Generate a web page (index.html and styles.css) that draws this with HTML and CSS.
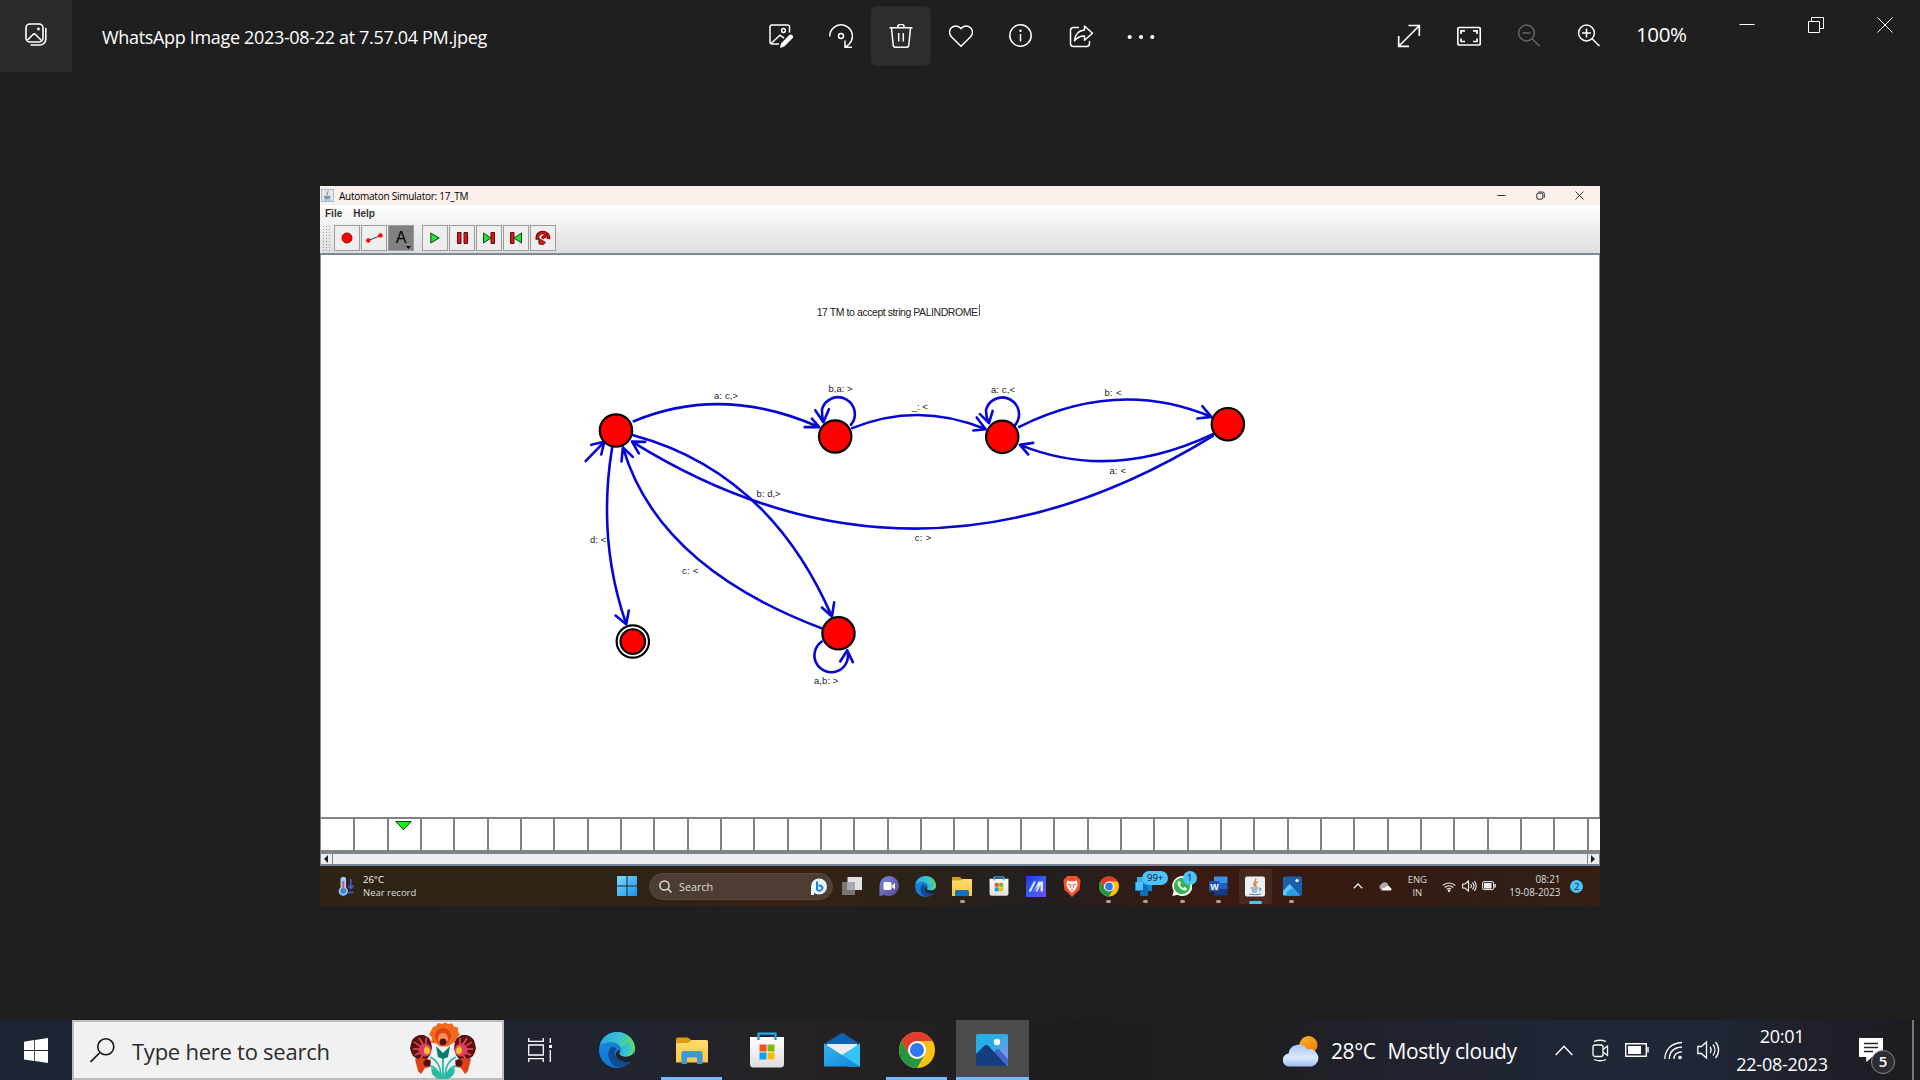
FILE: index.html
```html
<!DOCTYPE html>
<html lang="en">
<head>
<meta charset="utf-8">
<title>Photos</title>
<link rel="stylesheet" href="styles.css">
</head>
<body>
<svg class="defs" width="0" height="0">
  <defs>
    <linearGradient id="edgeTop" x1="0" y1="0.3" x2="1" y2="0.6"><stop offset="0" stop-color="#2aa9e6"/><stop offset=".5" stop-color="#35c4cf"/><stop offset="1" stop-color="#68dc55"/></linearGradient>
    <linearGradient id="edgeBody" x1="0" y1="0" x2="0.6" y2="1"><stop offset="0" stop-color="#1b8fe0"/><stop offset="1" stop-color="#0b6fd0"/></linearGradient>
    <linearGradient id="folderFront" x1="0" y1="0" x2="0" y2="1"><stop offset="0" stop-color="#ffdc70"/><stop offset="1" stop-color="#fcc63f"/></linearGradient>
    <linearGradient id="bagFill" x1="0" y1="0" x2="0" y2="1"><stop offset="0" stop-color="#ffffff"/><stop offset="1" stop-color="#dedede"/></linearGradient>
    <linearGradient id="mailFront" x1="0" y1="0" x2="1" y2="1"><stop offset="0" stop-color="#34b4ee"/><stop offset="1" stop-color="#1585dc"/></linearGradient>
    <linearGradient id="winFill" x1="0" y1="0" x2="1" y2="1"><stop offset="0" stop-color="#7fdcff"/><stop offset="1" stop-color="#1493f0"/></linearGradient>
    <linearGradient id="cloudFill" x1="0" y1="0" x2="0" y2="1"><stop offset="0" stop-color="#a9c8fb"/><stop offset=".6" stop-color="#dce8fd"/><stop offset="1" stop-color="#9dbcf2"/></linearGradient>
    <linearGradient id="sunFill" x1="0" y1="0" x2="0.6" y2="1"><stop offset="0" stop-color="#f9b52b"/><stop offset="1" stop-color="#f07c0c"/></linearGradient>
    <linearGradient id="skyFill" x1="0" y1="0" x2="1" y2="1"><stop offset=".4" stop-color="#27aee9"/><stop offset="1" stop-color="#9d8fe8"/></linearGradient>
    <linearGradient id="chatFill" x1="0" y1="0" x2="1" y2="1"><stop offset="0" stop-color="#7b87e6"/><stop offset="1" stop-color="#5a4691"/></linearGradient>
    <linearGradient id="xFill" x1="0" y1="0" x2="1" y2="1"><stop offset="0" stop-color="#2a2fe0"/><stop offset=".5" stop-color="#2f62f4"/><stop offset="1" stop-color="#7a45f2"/></linearGradient>
    <symbol id="edge" viewBox="0 0 36 36">
      <circle cx="18" cy="18" r="18" fill="url(#edgeBody)"/>
      <path d="M1 13C3 5 10 0 18 0c11 0 18 8 18 16 0 5-4 8.500-9 8.500-4 0-6.500-1.500-6.500-3 0-1.200 1.800-1.800 1.500-4.500C21.500 13 17 10 12 10 7 10 3 12 1 13z" fill="url(#edgeTop)"/>
      <path d="M13 14.500c-3 3-4.500 7-3 11.500C12 32 17 36 22 35.500c5-1 9-4.500 11-8-6 3-13 2-16-3-1.500-2.500-1.500-5 .5-8z" fill="#114a8f"/>
      <path d="M20.500 21.500c0 1.500 2.500 3 6.500 3 3.500 0 6.500-1.500 8-4v7c-5 4-13 3-16.500-1-2.500-3-2-7 1-8.500 1.800 0 2.200 1.500 1 3.500z" fill="#20222a"/>
      <path d="M20.500 21.500c0 1.500 2.500 3 6.500 3 4.500 0 9-3 9-8.500l-7-5-7 5c.3 3-1.500 4-1.500 5.500z" fill="url(#edgeTop)"/>
    </symbol>
    <symbol id="folder" viewBox="0 0 32 27">
      <path d="M0 2a1.500 1.500 0 0 1 1.500-1.500H12L15 3h16v8H0z" fill="#dd9d0a"/>
      <path d="M0 6h12.500L15.500 3H30.500A1.500 1.500 0 0 1 32 4.500V25.500H0z" fill="url(#folderFront)"/>
    </symbol>
    <symbol id="store" viewBox="0 0 36 36">
      <path d="M9.500 8V1.700H26.500V8" fill="none" stroke="#28a8ea" stroke-width="2.200"/>
      <path d="M1 5H35V32a3.500 3.500 0 0 1-3.500 3.500H4.500A3.500 3.500 0 0 1 1 32z" fill="url(#bagFill)"/>
      <path d="M9.500 5V8M26.500 5V8" stroke="#1687cf" stroke-width="2.200"/>
      <path d="M10.500 12.500h7v7h-7z" fill="#f25022"/><path d="M18.500 12.500h7v7h-7z" fill="#7fba00"/>
      <path d="M10.500 20.500h7v7h-7z" fill="#00a4ef"/><path d="M18.500 20.500h7v7h-7z" fill="#ffb900"/>
    </symbol>
    <symbol id="chrome" viewBox="0 0 36 36">
      <circle cx="18" cy="18" r="18" fill="#fbc116"/>
      <path d="M2.400 9A18 18 0 0 1 33.600 9H18L10.200 22.500z" fill="#e33b2e"/>
      <path d="M10.200 22.500L2.400 9A18 18 0 0 0 0 18 18 18 0 0 0 18 36L25 24z" fill="#25963f"/>
      <circle cx="18" cy="18" r="9" fill="#fff"/><circle cx="18" cy="18" r="7" fill="#2f78ee"/>
    </symbol>
    <symbol id="java" viewBox="0 0 20 20">
      <rect width="20" height="20" rx="2" fill="#eef1f4"/>
      <path d="M10.500 2c2 2.500-4 4.500-.5 8M13 5c-3 1.500-3 3-1.500 5" fill="none" stroke="#e0782c" stroke-width="1.300"/>
      <path d="M5.500 11.500h8M6.500 13.500h6M7 15.500h5M4 17.500c3 1 9 1 12-.3M14 11.500c2.500 0 2 2.500 0 2.500" fill="none" stroke="#5d83a6" stroke-width="1.100"/>
    </symbol>
    <symbol id="play" viewBox="0 0 10 12"><path d="M.8 1v10L9.200 6z" fill="#1be62e" stroke="#14401a" stroke-width="1"/></symbol>
  </defs>
</svg>

<header class="titlebar">
  <div class="home-tab">
    <svg width="24" height="24" viewBox="0 0 24 24" fill="none" stroke="#fff" stroke-width="1.600"><rect x="2" y="1" width="17" height="18" rx="4"/><path d="M21.800 5v11a6 6 0 0 1-6 6H6.500M3.500 17l5.500-5.500a1.800 1.800 0 0 1 2.500 0L17.500 17.500"/><circle cx="14.500" cy="6" r="1.400" fill="#fff" stroke="none"/></svg>
  </div>
  <div class="file-name">WhatsApp Image 2023-08-22 at 7.57.04 PM.jpeg</div>
  <nav class="commands">
    <button><svg width="24" height="24" viewBox="0 0 24 24" fill="none" stroke="#fff" stroke-width="1.500"><path d="M20.500 8.500V3a2 2 0 0 0-2-2H3a2 2 0 0 0-2 2v15a2 2 0 0 0 2 2h7M2 19.500l9-8.300 4 3"/><circle cx="14.500" cy="6.500" r="1.900"/><path d="M11 24l1-4.500 8-8.200a2.200 2.200 0 0 1 3.300 3.200l-8 8z" fill="#fff" stroke="none"/></svg></button>
    <button><svg width="24" height="24" viewBox="0 0 24 24" fill="none" stroke="#fff" stroke-width="1.500"><path d="M.8 12.500A11.300 11.300 0 1 1 20 20.300L16.500 23.200M16 16.500V23.200H23"/><circle cx="12" cy="12" r="2.500"/></svg></button>
    <button class="active"><svg width="24" height="24" viewBox="0 0 24 24" fill="none" stroke="#fff" stroke-width="1.500"><path d="M.5 3.800h23M8.700 3.500a3.300 3.300 0 0 1 6.600 0M2.500 4l1.700 17a2.300 2.300 0 0 0 2.300 2.200h11a2.300 2.300 0 0 0 2.300-2.200L21.500 4M9.700 9v8.500M14.300 9v8.500"/></svg></button>
    <button><svg width="24" height="24" viewBox="0 0 24 24" fill="none" stroke="#fff" stroke-width="1.500"><path d="M12 22.300L2.400 12.700A6.200 6.200 0 0 1 2.400 3.800 6.200 6.200 0 0 1 11.200 3.800L12 4.600l.8-.8a6.200 6.200 0 0 1 8.800 0 6.200 6.200 0 0 1 0 8.900z"/></svg></button>
    <button><svg width="24" height="24" viewBox="0 0 24 24" fill="none" stroke="#fff" stroke-width="1.500"><circle cx="11.500" cy="11.500" r="10.700"/><path d="M11.500 10v7.500"/><circle cx="11.500" cy="6.700" r="1.200" fill="#fff" stroke="none"/></svg></button>
    <button><svg width="24" height="24" viewBox="0 0 24 24" fill="none" stroke="#fff" stroke-width="1.500" stroke-linejoin="round"><path d="M10 3.500H4.500a3 3 0 0 0-3 3v13a3 3 0 0 0 3 3h13a3 3 0 0 0 3-3V17M15.500 2l8 7.200-8 7v-4.200c-4.500 0-7.500 1.500-10 4.800C6 11 9 6.500 15.500 6z"/></svg></button>
    <button><svg width="28" height="24" viewBox="0 0 28 24" fill="#fff"><circle cx="2.700" cy="13" r="2.100"/><circle cx="14" cy="13" r="2.100"/><circle cx="25.300" cy="13" r="2.100"/></svg></button>
  </nav>
  <nav class="zoom-tools">
    <button><svg width="24" height="24" viewBox="0 0 24 24" fill="none" stroke="#fff" stroke-width="1.700"><path d="M2 22L22 2M11.500 1.500H22.300V12M1.700 12v10.300H12"/></svg></button>
    <button><svg width="24" height="24" viewBox="0 0 24 24" fill="none" stroke="#fff" stroke-width="1.700"><rect x=".8" y="3.500" width="22.500" height="17.500" rx="1.500"/><path d="M8 6.800H4V10M16 6.800h4V10M8 17.500H4V14.500M16 17.500h4V14.500"/></svg></button>
    <button><svg width="24" height="24" viewBox="0 0 24 24" fill="none" stroke="#666" stroke-width="1.500"><circle cx="9.500" cy="9" r="7.900"/><path d="M15 14.800l7.500 7.200M5.500 9h8"/></svg></button>
    <button><svg width="24" height="24" viewBox="0 0 24 24" fill="none" stroke="#fff" stroke-width="1.500"><circle cx="9.500" cy="9" r="7.900"/><path d="M15 14.800l7.500 7.200M5 9h9M9.500 4.500v9"/></svg></button>
  </nav>
  <div class="zoom-level">100%</div>
  <nav class="window-buttons">
    <button><svg width="16" height="16" viewBox="0 0 16 16" stroke="#fff" fill="none"><path d="M.5 7.500h15"/></svg></button>
    <button><svg width="16" height="16" viewBox="0 0 16 16" stroke="#fff" fill="none"><path d="M.5 4.500h11v11H.5zM3.500 4V.5h12v11H12"/></svg></button>
    <button><svg width="16" height="16" viewBox="0 0 16 16" stroke="#fff" fill="none"><path d="M.5.5l15 15M15.500.5l-15 15"/></svg></button>
  </nav>
</header>

<main class="viewer">
  <section class="photo">
    <div class="sim-title">
      <svg width="13" height="13" viewBox="0 0 20 20"><rect x=".5" y=".5" width="19" height="19" fill="#dfe9ef" stroke="#8ea3b0"/><path d="M10.500 3c2 2-3.500 3.500-.5 6.500" fill="none" stroke="#d27a55" stroke-width="1.800"/><path d="M5 11h9v2c0 3-9 3-9 0zM4 17h12" fill="#6c93b3" stroke="#6c93b3"/></svg>
      <span>Automaton Simulator: 17_TM</span>
      <div class="sim-window">
        <svg width="9" height="9" viewBox="0 0 9 9" stroke="#333" fill="none"><path d="M.5 4.500h8"/></svg>
        <svg width="9" height="9" viewBox="0 0 9 9" stroke="#333" fill="none"><rect x=".8" y="2.200" width="6" height="6" rx="1.200"/><path d="M2.500 1h4a1.800 1.800 0 0 1 1.800 1.800v4"/></svg>
        <svg width="9" height="9" viewBox="0 0 9 9" stroke="#333" fill="none"><path d="M.5.5l8 8M8.500.5l-8 8"/></svg>
      </div>
    </div>
    <div class="sim-head">
      <div class="sim-menu"><span>File</span><span>Help</span></div>
      <div class="sim-tools">
        <i class="grip"></i>
        <b><svg width="12" height="12"><circle cx="6" cy="6" r="5" fill="#f00" stroke="#8a1010"/></svg></b>
        <b><svg width="17" height="10"><path d="M2 7.500L15 2.500" stroke="#333"/><circle cx="2.300" cy="7.500" r="2.200" fill="#f00"/><circle cx="14.500" cy="2.400" r="2.200" fill="#f00"/></svg></b>
        <b class="on">A<svg class="caret" width="5" height="3"><path d="M0 0h5L2.500 3z"/></svg></b>
        <b class="gap"><svg width="10" height="12"><use href="#play"/></svg></b>
        <b><svg width="11" height="12" fill="#e01717" stroke="#5c0c0c"><path d="M.5.500h3.500v11H.5zM7 .5h3.500v11H7z"/></svg></b>
        <b><svg width="12" height="12"><path d="M.5 1v10L8 6z" fill="#1be62e" stroke="#14401a"/><path d="M8 .5h3.500v11H8z" fill="#e01717" stroke="#5c0c0c"/></svg></b>
        <b><svg width="12" height="12"><path d="M11.500 1v10L4 6z" fill="#1be62e" stroke="#14401a"/><path d="M.5.500H4v11H.5z" fill="#e01717" stroke="#5c0c0c"/></svg></b>
        <b><svg width="16" height="16" fill="none"><path d="M2.500 9.500C1.500 5 4.500 2.500 8 2.500s6 3 5.500 6.500" stroke="#500808" stroke-width="3.600"/><path d="M2.500 9.500C1.500 5 4.500 2.500 8 2.500s6 3 5.500 6.500" stroke="#dd1414" stroke-width="2"/><path d="M12 6.500C10 5.500 8.500 6.500 7.500 8.500" stroke="#500808" stroke-width="3.200"/><path d="M12 6.500C10 5.500 8.500 6.500 7.500 9" stroke="#dd1414" stroke-width="1.800"/><path d="M3.500 8l7 4.500-2.500 2.300-4-.8z" fill="#dd1414" stroke="#500808" stroke-width=".8"/></svg></b>
      </div>
    </div>
    <svg class="diagram" viewBox="320 255 1280 562" width="1280" height="562">
      <g class="edges">
        <path d="M633.300 421Q722 384 819 427M804.500 427L819 427 811.700 418.500"/>
        <path d="M850.700 424.700A16.800 16.800 0 1 0 821.800 409Q821.500 416 823.200 422M815 410L823.200 422 828.700 409"/>
        <path d="M852 428Q918 401 985.700 429M973.300 430.300L985.700 429 976.700 417.300"/>
        <path d="M1015.300 424.700A16.800 16.800 0 1 0 986 410Q986 417 989 423M980 414L989 423 992.700 410.700"/>
        <path d="M1019.300 426.700Q1118 377.500 1211.700 416.700M1202.700 406L1211.700 416.700 1197.700 418.300"/>
        <path d="M1213.300 434Q1112 482 1020 444.700M1033.300 442.700L1020 444.700 1028.300 454.300"/>
        <path d="M1213.300 435.700Q916 618.500 631.500 441.500M644.700 441.700L631.500 441.500 638.300 453.300"/>
        <path d="M632.700 435Q768.700 471.700 831.700 616.700M834 602.300L831.700 616.700 821.700 607.700"/>
        <path d="M821 628.300Q657 566 622.400 447.300M621 461.300L622.400 447.300 632.300 456.700"/>
        <path d="M611.500 448Q596.500 540 625.700 624.300M628.300 610.700L625.700 624.300 615 615.700"/>
        <path d="M585 461L603.700 441.700M590.700 444.700L603.700 441.700 600.700 454.300"/>
        <path d="M821.700 641.700A16.800 16.800 0 1 0 847 650.500M840 661.700L847 650.500 852.700 662.300"/>
      </g>
      <g class="states">
        <circle cx="615.400" cy="430.300" r="16.200"/><circle cx="835" cy="436.300" r="16.200"/><circle cx="1002.300" cy="436.700" r="16.200"/>
        <circle cx="1228.300" cy="424" r="16.200"/><circle cx="838.300" cy="633.500" r="16.200"/>
        <circle class="ring" cx="632.300" cy="641.700" r="16.200"/><circle cx="632.300" cy="641.700" r="12.300"/>
      </g>
      <g class="labels">
        <text x="713.700" y="399" textLength="24">a: c,&gt;</text><text x="828.300" y="392" textLength="24">b,a: &gt;</text>
        <text x="911.700" y="409.500" textLength="16">_: &lt;</text><text x="991" y="392.500" textLength="24">a: c,&lt;</text>
        <text x="1104.700" y="396" textLength="17">b: &lt;</text><text x="1109.700" y="473.500" textLength="16.500">a: &lt;</text>
        <text x="756.300" y="497.300" textLength="24">b: d,&gt;</text><text x="914.700" y="540.700" textLength="16.500">c: &gt;</text>
        <text x="589.300" y="543" textLength="16.500">d: &lt;</text><text x="681.500" y="573.700" textLength="16.500">c: &lt;</text>
        <text x="813.700" y="684" textLength="24.500">a,b: &gt;</text>
        <text class="caption" x="816.500" y="315.500" textLength="161.500">17 TM to accept string PALINDROME</text>
        <path d="M979.500 304v11.500" stroke="#555"/>
      </g>
    </svg>
    <div class="tape"><svg width="17" height="10"><path d="M.8.500h15.400L8.500 8.800z" fill="#0f0" stroke="#063d06"/></svg></div>
    <div class="scrollbar">
      <i><svg width="4" height="8"><path d="M4 0v8L0 4z" fill="#222"/></svg></i>
      <i><svg width="4" height="8"><path d="M0 0v8l4-4z" fill="#222"/></svg></i>
    </div>
    <div class="inner-bar">
      <div class="record">
        <svg width="16" height="20" viewBox="0 0 16 20"><path d="M2.500 3.500a2.800 2.800 0 0 1 5.600 0v8a4.600 4.600 0 1 1-5.600 0z" fill="#9ccdf5"/><circle cx="5.300" cy="15" r="3" fill="#2490e6"/><path d="M5.300 5v9" stroke="#d8546c" stroke-width="1.800"/><path d="M12.800 3v9M10.300 9.500l2.500 3 2.500-3M10 16.500h5.500" fill="none" stroke="#3c62d8" stroke-width="1.500"/></svg>
        <p><span class="bright">26°C</span><span>Near record</span></p>
      </div>
      <svg class="win11" width="20" height="20" viewBox="0 0 20 20" fill="url(#winFill)"><path d="M0 0h9.500v9.500H0zM10.500 0H20v9.500h-9.500zM0 10.500h9.500V20H0zM10.500 10.500H20V20h-9.500z"/></svg>
      <div class="inner-search">
        <svg width="13" height="13" viewBox="0 0 13 13" fill="none" stroke="#ddd" stroke-width="1.500"><circle cx="5.500" cy="5.500" r="4.600"/><path d="M9 9l3.500 3.500"/></svg>
        <span>Search</span>
        <svg width="16" height="17" viewBox="0 0 16 17"><circle cx="8" cy="8.500" r="8" fill="#e9f6fd"/><path d="M0 8h3v9H0z" fill="#e9f6fd"/><path d="M6 3.500v8.500M6 12c3 2 6-.5 5.500-2.500C11 8 9 7.500 7.500 7.500" fill="none" stroke="#1683d8" stroke-width="2"/></svg>
      </div>
      <div class="inner-apps">
        <div><svg width="20" height="20"><path d="M0 6h13v13H0z" fill="#777"/><path d="M5.500 1H20v13H5.500z" fill="#ececec" opacity=".95"/><path d="M5.500 6H13v8H5.500z" fill="#aaa"/></svg></div>
        <div><svg width="20" height="20"><path d="M10 0a10 10 0 1 1-4.500 19L.5 20V10A10 10 0 0 1 10 0z" fill="url(#chatFill)"/><rect x="4.500" y="6" width="8" height="8" rx="1.500" fill="#fff"/><path d="M13 9.500L16 7v6.500L13 11z" fill="#fff"/></svg></div>
        <div><svg width="21" height="21"><use href="#edge"/></svg></div>
        <div class="run"><svg width="20" height="20"><path d="M0 1h8l2 2h10v5H0z" fill="#d99812"/><path d="M0 4.500h9l1.500-1.500H20v17H0z" fill="url(#folderFront)"/><path d="M3 20v-4.500a1.500 1.500 0 0 1 1.500-1.500h11a1.500 1.500 0 0 1 1.500 1.500V20z" fill="#1173b8"/></svg></div>
        <div><svg width="20" height="20"><use href="#store"/></svg></div>
        <div><svg width="20" height="21"><path d="M0 0h20v21H0z" fill="url(#xFill)"/><path d="M2.500 15.500L7.800 5.500H10L5 15.500zM7.500 15.500L12.500 5.500H17V15.500H14.500V9L11.500 15.500H9.500L12.500 9z" fill="#dfe6ff"/></svg></div>
        <div><svg width="18" height="21" viewBox="0 0 18 21"><path d="M4.500 0h9l4 4-.8 9.500L9 21 1.300 13.500.5 4z" fill="#f6512c"/><path d="M4 4.500l3 .8h4l3-.8.5 5-2.500 4.500L9 17l-3-3-2.500-4.500z" fill="#fff"/><path d="M5 8l3 1-1 3M13 8l-3 1 1 3M8 13.500h2" fill="none" stroke="#f6512c"/></svg></div>
        <div class="run"><svg width="20" height="21"><use href="#chrome"/></svg></div>
        <div class="run badged"><svg width="20" height="20"><path d="M2 1h11v13H2z" fill="#35aef0"/><path d="M0 6h17v9H0z" fill="#1788d4"/><path d="M5 9h8v11H5z" fill="#0e6cbd"/><path d="M1 6h7v8H1z" fill="#48c0f5"/></svg><em class="wide">99+</em></div>
        <div class="run badged"><svg width="20" height="20"><path d="M10 0a10 10 0 1 1-4.500 18.700L.3 20l1.400-4.800A10 10 0 0 1 10 0z" fill="#fff"/><circle cx="10" cy="10" r="8.300" fill="#35b54d"/><path d="M6 5.500c-2 3 3.500 9.500 7.500 9 1.500-.5 1.500-2 1-2.500l-2-1-1.500 1c-1.500-.5-2.500-1.500-3-3l1-1.500-1-2c-.5-.5-1.500-.5-2 0z" fill="#fff"/></svg><em>1</em></div>
        <div class="run"><svg width="20" height="20"><path d="M5 .5h13.500V7H5z" fill="#3d8fe8"/><path d="M5 7h13.500v6H5z" fill="#1e5fc0"/><path d="M5 13h13.500v6.500H5z" fill="#133d80"/><path d="M0 5h10.500v10.500H0z" fill="#1c52b0"/><text x="1.300" y="13.500" class="w">W</text></svg></div>
        <div class="current"><svg width="20" height="21"><use href="#java"/></svg></div>
        <div class="run"><svg width="19" height="20"><rect y=".5" width="19" height="19" rx="1.500" fill="#1d5faa"/><path d="M0 15l6.500-7L17 19.500H1.500A1.500 1.500 0 0 1 0 18z" fill="#5cc8fa"/><path d="M4 16l5-4 8 7.500H3z" fill="#2c9be8"/><circle cx="14" cy="4.500" r="1.600" fill="#fff"/></svg></div>
      </div>
      <div class="inner-tray">
        <svg width="10" height="6" fill="none" stroke="#eee" stroke-width="1.300"><path d="M.8 5.200L5 1l4.200 4.200"/></svg>
        <svg width="14" height="10"><path d="M3 8.500a2.800 2.800 0 0 1 0-5 4 4 0 0 1 7-.5l1 5z" fill="#aaa"/><path d="M3.500 9.500c0-2 2-3 3.500-2.500C8 4 12 4.500 12 6.500c2 .5 2 3 0 3z" fill="#fff"/></svg>
        <p class="lang"><span>ENG</span><span>IN</span></p>
        <svg width="14" height="11" fill="none" stroke="#eee" stroke-width="1.100"><path d="M.8 4.500a9 9 0 0 1 12.400 0M2.800 6.500a6 6 0 0 1 8.400 0M4.800 8.300a3.200 3.200 0 0 1 4.400 0"/><circle cx="7" cy="9.800" r=".7" fill="#eee"/></svg>
        <svg width="15" height="12" fill="none" stroke="#eee" stroke-width="1.100"><path d="M.6 4v4h2.300L6.500 11V1L2.900 4zM8.500 4a3 3 0 0 1 0 4M10.500 2.500a5 5 0 0 1 0 7M12.300 1a7.500 7.500 0 0 1 0 10"/></svg>
        <svg width="14" height="10"><rect x=".6" y=".6" width="11" height="8" rx="1.500" fill="none" stroke="#eee"/><path d="M2 2H9.500v5.500H2zM12.300 3h1.500v3.500h-1.500z" fill="#eee"/></svg>
        <p class="clock"><span>08:21</span><span>19-08-2023</span></p>
        <strong>2</strong>
      </div>
    </div>
  </section>
</main>

<footer class="taskbar">
  <div class="start"><svg width="24" height="25" viewBox="0 0 24 25" fill="#fff"><path d="M0 3.700L10.200 2v10H0zM11 1.900L24 0v12H11zM0 12.900h10.200v10L0 21.500zM11 12.900h13v12L11 23z"/></svg></div>
  <div class="search">
    <svg width="25" height="25" viewBox="0 0 25 25" fill="none" stroke="#111" stroke-width="1.600"><circle cx="15.800" cy="8.800" r="8"/><path d="M10 14.500L.5 24"/></svg>
    <span>Type here to search</span>
    <svg class="flower" width="66" height="57" viewBox="0 0 66 57">
      <path d="M21 9l2-4 3-1 2-3 4 1 3-1.500 3 1.500 4-.5 2 3 4 1 0 4 2 3-3 3 0 4-5 2-4 3h-8l-4-3-5-1 1-5-3-3z" fill="#f26a1b"/>
      <path d="M25 15c0-5 3-9 8-9s8 4 8 9l-3 6H28z" fill="#e2420d"/><path d="M28 18c0-6 3-7 5-7s5 1 5 7l-2 4h-6z" fill="#f7925a"/>
      <circle cx="33" cy="20" r="3.500" fill="#53110f"/>
      <path d="M1 22l1-4 3-3 4-2 5 0 5 3 2 4 1 6-2 7-3 4-5 1-5-1-4-3-2-4-1-4z" fill="#5a1116"/>
      <path d="M65 22l-1-4-3-3-4-2-5 0-5 3-2 4-1 6 2 7 3 4 5 1 5-1 4-3 2-4 1-4z" fill="#5a1116"/>
      <g stroke="#ee5149" stroke-width="1.500"><path d="M3 27h12M4 20l12 8M9 16l7 11M16 16v10M5 33l11-5M10 37l7-9M63 27H51M62 20l-12 8M57 16l-7 11M50 16v10M61 33l-11-5M56 37l-7-9"/></g>
      <circle cx="15" cy="28" r="6.500" fill="#e2396b"/><circle cx="51" cy="28" r="6.500" fill="#e2396b"/>
      <path d="M14 29c0-6 4-6 6-1 1 5-6 6-6 1zM52 29c0-6-4-6-6-1-1 5 6 6 6 1z" fill="#f9c41a"/>
      <path d="M5 37l7-1 9 2-1 7-5 1-4 6-3-3-1-4z" fill="#da4218"/><path d="M61 37l-7-1-9 2 1 7 5 1 4 6 3-3 1-4z" fill="#da4218"/>
      <circle cx="17" cy="41" r="3.500" fill="#4f1012"/><circle cx="49" cy="41" r="3.500" fill="#4f1012"/>
      <path d="M33 57V34M31 53Q30 39 20 35M35 53Q36 39 46 35M30 55Q26 44 20 44M36 55Q40 44 46 44" fill="none" stroke="#25b9a5" stroke-width="1.800"/>
      <path d="M26 24l7 7 7-7-2 11-5 2-5-2z" fill="#087b70"/><path d="M21 46c6 1 10 4 12 10 2-6 6-9 12-10l-1 6-4 4-7 2-7-2-4-4z" fill="#27bba5"/>
    </svg>
  </div>
  <div class="taskview"><svg width="24" height="24" viewBox="0 0 24 24" fill="none" stroke="#fff" stroke-width="1.300"><path d="M.7 0v3.300h14.600V0M.7 24v-3.300h14.600V24M.7 7h14.600v10H.7zM22.300 0v5M22.300 12v12"/><path d="M21 7h3v3h-3z" fill="#fff" stroke="none"/></svg></div>
  <div class="apps">
    <div><svg width="36" height="36"><use href="#edge"/></svg></div>
    <div class="open"><svg width="32" height="27" viewBox="0 0 32 27"><use href="#folder" width="32" height="27"/><path d="M5.500 27V16a2 2 0 0 1 2-2h17a2 2 0 0 1 2 2v11h-5.500v-6.500H11V27z" fill="#3b97df"/></svg></div>
    <div><svg width="36" height="36"><use href="#store"/></svg></div>
    <div><svg width="36" height="34" viewBox="0 0 36 34"><path d="M0 11L16 .8a3.500 3.500 0 0 1 4 0L36 11v5H0z" fill="#0c62b4"/><path d="M3 11h30v8l-15 6-15-6z" fill="#ededed"/><path d="M36 10.500L18 22 24 33.500H36z" fill="#35c3f3"/><path d="M0 10.500L36 33.500H0z" fill="url(#mailFront)"/></svg></div>
    <div class="open"><svg width="36" height="36"><use href="#chrome"/></svg></div>
    <div class="focused"><svg width="32" height="32" viewBox="0 0 32 32"><rect width="32" height="32" rx="1.500" fill="url(#skyFill)"/><circle cx="21" cy="8" r="3.200" fill="#fff"/><path d="M14 24l5.500-8a2.500 2.500 0 0 1 4 0L32 25v5l-2 2z" fill="#3f68c8"/><path d="M0 20L8 12a3 3 0 0 1 4.500 0L31 32H1.500A1.500 1.500 0 0 1 0 30.500z" fill="#143f7d"/></svg></div>
  </div>
  <div class="weather">
    <svg width="36" height="31" viewBox="0 0 36 31"><circle cx="25.500" cy="9" r="9" fill="url(#sunFill)"/><path d="M7 30.500A6.500 6.500 0 0 1 5.500 17.500 10 10 0 0 1 24 13.500a8.300 8.300 0 0 1 5 17z" fill="url(#cloudFill)"/></svg>
    <span>28°C</span><span class="sky">Mostly cloudy</span>
  </div>
  <div class="tray">
    <svg width="18" height="11" fill="none" stroke="#fff" stroke-width="1.400"><path d="M.7 10L9 1.300 17.300 10"/></svg>
    <svg width="17" height="23" fill="none" stroke="#fff" stroke-width="1.300"><rect x="1" y="6" width="10" height="11.500" rx="2"/><path d="M11 10.500l4.500-3.500v9.500L11 13M2 2.500Q8 0 14 2.500M2 20.500Q8 23 14 20.500"/></svg>
    <svg width="24" height="14" fill="none" stroke="#fff" stroke-width="1.400"><path d="M.7.700h20.600v12.600H.7zM23 4v5.500"/><path d="M3 3h13v8H3z" fill="#fff" stroke="none"/></svg>
    <svg width="19" height="19" fill="none" stroke="#fff" stroke-width="1.300"><g><path d="M.8 18C1 9 7 2 18 1.500M5.300 18C5.500 11 10 6.500 18 6M9.800 18c.2-4 3-7 8.200-7.200"/></g><circle cx="16" cy="16.500" r="1.800" fill="#fff" stroke="none"/></svg>
    <svg width="23" height="20" fill="none" stroke="#fff" stroke-width="1.300"><path d="M.8 6.500v7h3.500L9.500 18V2L4.300 6.500zM13 7a5 5 0 0 1 0 6M16 4.500a9 9 0 0 1 0 11M18.500 2a12 12 0 0 1 0 16"/></svg>
  </div>
  <div class="datetime"><span>20:01</span><span>22-08-2023</span></div>
  <div class="notices"><svg width="24" height="24" viewBox="0 0 24 24"><path d="M0 0h24v19H13L7.500 24 7 19H0z" fill="#fff"/><path d="M5 5.500h14M5 9.500h14M5 13.500h9" stroke="#222" stroke-width="1.300"/></svg><em>5</em></div>
</footer>
</body>
</html>
```
FILE: styles.css
```css
* { box-sizing: border-box; }
body { margin: 0; width: 1920px; height: 1080px; overflow: hidden; display: flex; flex-direction: column; background: #1f1f1f; color: #fff; font-family: "Open Sans", "Noto Sans", sans-serif; }
svg { display: block; flex: none; }
.defs { position: absolute; }
p, i, em, b, strong { margin: 0; font-style: normal; }
button { border: 0; padding: 0; background: none; display: flex; align-items: center; justify-content: center; border-radius: 6px; }

.titlebar { height: 72px; flex: none; display: grid; grid-template-columns: 72px 679px 420px 208px 240px 93px 208px; }
.titlebar > div { display: flex; align-items: center; }
.home-tab { background: #2b2b2b; justify-content: center; padding-bottom: 2px; }
.file-name { padding-left: 30px; padding-top: 1px; font-size: 18px; letter-spacing: -.33px; white-space: nowrap; }
.commands, .zoom-tools { display: grid; grid-auto-flow: column; grid-auto-columns: 60px; height: 66px; padding-top: 6px; }
.commands .active { background: #2c2c2c; }
.zoom-tools { grid-column: 5; }
.zoom-level { padding: 0 0 4px 17px; font-size: 20.500px; letter-spacing: -.4px; }
.window-buttons { display: grid; grid-template-columns: repeat(3, 69px); height: 49px; }

.viewer { flex: 1; display: flex; align-items: center; justify-content: center; }
.photo { width: 1280px; height: 720px; display: flex; flex-direction: column; background: #fff; color: #000; }
.sim-title { height: 19px; flex: none; display: flex; align-items: center; background: #f9efeb; padding-left: 1px; font-size: 10px; letter-spacing: -.25px; }
.sim-title > span { padding-left: 5px; }
.sim-window { margin-left: auto; display: flex; gap: 30px; padding-right: 16px; }
.sim-head { height: 50px; flex: none; background: linear-gradient(#fefefe, #dedede); border-bottom: 2px solid #7a8a99; }
.sim-menu { display: flex; gap: 11px; height: 20px; padding: 0 0 3px 5px; align-items: center; font: bold 10px "Liberation Sans", Arial, sans-serif; color: #333; }
.sim-tools { display: flex; align-items: center; padding-left: 2px; }
.sim-tools b { position: relative; width: 26px; height: 26px; margin-right: 1px; border: 1px solid #9c9c9c; background: #eee; display: flex; align-items: center; justify-content: center; }
.sim-tools .on { background: #808080; font: 16px "Liberation Sans", Arial, sans-serif; }
.sim-tools .caret { position: absolute; right: 2px; bottom: 1px; }
.sim-tools .gap { margin-left: 7px; }
.grip { width: 8px; height: 26px; margin-right: 4px; background: radial-gradient(#999 .7px, transparent 1px) 0 0 / 3px 3px; }

.diagram { border-left: 1px solid #7a8a99; border-right: 1px solid #7a8a99; }
.edges path { fill: none; stroke: #0505d6; stroke-width: 2.600; stroke-linecap: round; stroke-linejoin: round; }
.states circle { fill: #f00; stroke: #000; stroke-width: 2.200; }
.states .ring { fill: #fff; }
.labels { font: 9.500px "Liberation Sans", Arial, sans-serif; fill: #222; }
.labels .caption { font-size: 10.500px; }

.tape { height: 36px; flex: none; padding: 2px 0 0 74px; border: solid #838383; border-width: 2px 0 3px 1px; background: repeating-linear-gradient(90deg, #fff 0 31.300px, #808080 31.300px 33.333px) 1px 0; }
.scrollbar { height: 13px; flex: none; display: flex; justify-content: space-between; background: #eee; border: solid #73869a; border-width: 1px 1px 2px; }
.scrollbar i { width: 12px; padding-right: 2px; display: flex; align-items: center; justify-content: center; background: #eee; border: solid #73869a; border-width: 0 1px 0 0; }
.scrollbar i:last-child { border-width: 0 0 0 1px; }

.inner-bar { flex: 1; display: flex; align-items: center; color: #ddd; font-size: 9.500px; background: linear-gradient(90deg, #2f2414, #2e2315 28%, #3a2112 35%, #2e2317 43%, #231f1f 57%, #391b12 69%, #361b12 83%, #2f1f16 93%, #351e13); }
.inner-bar p { display: flex; flex-direction: column; line-height: 13px; white-space: nowrap; }
.record { width: 297px; padding-left: 18px; display: flex; align-items: center; gap: 9px; }
.bright { color: #fff; }
.inner-search { width: 184px; height: 27px; margin: 0 1px 0 12px; padding: 0 5px 0 9px; border-radius: 14px; background: #4d3d32; border: 1px solid #5b493d; display: flex; align-items: center; font-size: 10.800px; }
.inner-search span { padding-left: 7px; flex: 1; }
.inner-apps { display: flex; }
.inner-apps > div { position: relative; width: 36.650px; height: 40px; display: flex; align-items: center; justify-content: center; }
.run::after, .current::after { content: ""; position: absolute; bottom: 3.500px; left: 15.800px; width: 5px; height: 3px; border-radius: 2px; background: #aaa29e; }
.inner-apps .current { width: 32.650px; height: 35px; margin: 2.500px 2px; border-radius: 3px; background: #47291f; }
.current::after { left: 10px; width: 13px; bottom: 0; background: #4cc2ff; }
.badged em { position: absolute; top: 5px; left: 19px; min-width: 14px; height: 14px; border-radius: 7px; background: #4cc2ff; color: #111; line-height: 14px; text-align: center; }
.badged .wide { left: 15px; width: 26px; }
.w { font: bold 9px "Liberation Sans", Arial, sans-serif; fill: #fff; }
.inner-tray { margin-left: 43px; display: flex; align-items: center; }
.lang { width: 20px; margin: 0 15px; align-items: center; }
.inner-tray > svg:nth-child(2) { margin-left: 15px; }
.inner-tray > svg:nth-child(5) { margin-left: 6px; }
.inner-tray > svg:nth-child(6) { margin-left: 5px; }
.clock { width: 64px; align-items: flex-end; font-size: 9.900px; letter-spacing: -.05px; }
.inner-tray strong { width: 13px; height: 13px; margin-left: 10px; border-radius: 50%; background: #4cc2ff; color: #222; font: 9px/13px "Open Sans", sans-serif; text-align: center; }

.taskbar { height: 60px; flex: none; display: flex; background: linear-gradient(90deg, #1d2434, #20242f 33%, #262224 42%, #1d1d20 56%, #201e20 65%, #202433 76%, #1f2737 88%, #20202a 95%, #1b1b20); }
.taskbar > div { display: flex; align-items: center; flex: none; }
.start { width: 72px; padding-left: 24px; }
.search { width: 432px; background: #f1f1f1; border: 2px solid #bdbdbd; padding-left: 16px; color: #2b2b2b; font-size: 22px; white-space: nowrap; }
.search span { width: 276px; padding: 1px 0 0 17px; letter-spacing: -.25px; }
.search .flower { margin-left: 19px; }
.taskview { width: 75px; padding-left: 24px; }
.apps > div { width: 75px; height: 60px; display: flex; align-items: center; justify-content: center; }
.apps .open { background: linear-gradient(#76b9ff, #76b9ff) 50% 100% / 61px 3px no-repeat; }
.apps .focused { width: 73px; margin-left: 2px; background: #4c4b4d; border-bottom: 3px solid #76b9ff; padding-top: 3px; padding-right: 1px; }
.weather { margin-left: 254px; width: 272px; padding-top: 2px; font-size: 21px; white-space: nowrap; letter-spacing: -.42px; }
.weather span { padding-left: 12px; }
.weather .sky { padding-left: 12px; }
.tray svg:nth-child(2) { margin-left: 19px; }
.tray svg:nth-child(3) { margin-left: 16px; }
.tray svg:nth-child(4) { margin-left: 15px; }
.tray svg:nth-child(5) { margin-left: 13.500px; }
.taskbar .tray { width: 165px; }
.taskbar .datetime { width: 120px; margin-left: 2px; flex-direction: column; justify-content: center; font-size: 18px; line-height: 28px; letter-spacing: -.25px; }
.notices { position: relative; width: 55px; margin-left: 17px; border-right: 2px solid #777; }
.notices em { position: absolute; left: 12px; top: 30px; width: 24px; height: 24px; border-radius: 50%; background: #2c2d33; border: 1.500px solid #888; font-size: 15px; font-weight: 600; line-height: 21px; text-align: center; }
```
